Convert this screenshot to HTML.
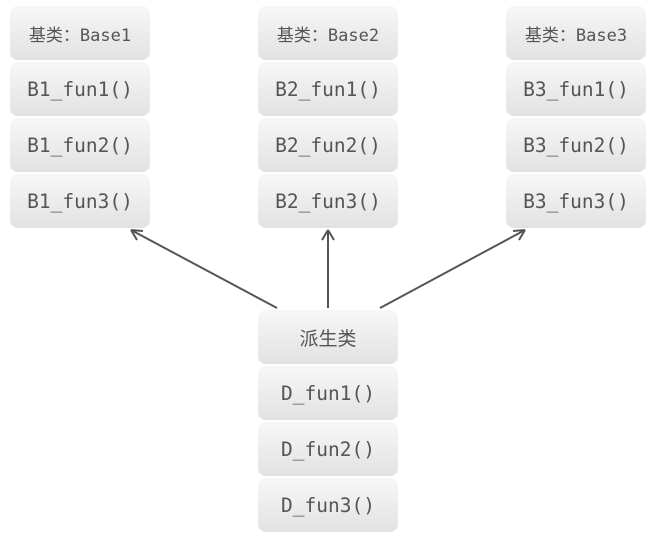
<!DOCTYPE html><html><head><meta charset="utf-8"><style>
body{margin:0;width:652px;height:540px;background:#fff;position:relative;overflow:hidden}
.b{position:absolute;width:140px;height:54px;border-radius:8px;background:linear-gradient(#f7f7f7,#e2e2e2);display:flex;align-items:center;justify-content:center;font-family:"DejaVu Sans Mono","Liberation Mono","Noto Sans CJK SC",monospace;font-size:19.5px;color:#555}
.c{font-family:"DejaVu Sans Mono","Noto Sans CJK SC",monospace;font-size:17px}
</style></head><body>
<div class="b c" style="left:10px;top:6px">基类：Base1</div>
<div class="b" style="left:10px;top:62px">B1_fun1()</div>
<div class="b" style="left:10px;top:118px">B1_fun2()</div>
<div class="b" style="left:10px;top:174px">B1_fun3()</div>
<div class="b c" style="left:258px;top:6px">基类：Base2</div>
<div class="b" style="left:258px;top:62px">B2_fun1()</div>
<div class="b" style="left:258px;top:118px">B2_fun2()</div>
<div class="b" style="left:258px;top:174px">B2_fun3()</div>
<div class="b c" style="left:506px;top:6px">基类：Base3</div>
<div class="b" style="left:506px;top:62px">B3_fun1()</div>
<div class="b" style="left:506px;top:118px">B3_fun2()</div>
<div class="b" style="left:506px;top:174px">B3_fun3()</div>
<div class="b c" style="left:258px;top:310px;font-size:19px">派生类</div>
<div class="b" style="left:258px;top:366px">D_fun1()</div>
<div class="b" style="left:258px;top:422px">D_fun2()</div>
<div class="b" style="left:258px;top:478px">D_fun3()</div>
<svg width="652" height="540" style="position:absolute;left:0;top:0" fill="none" stroke="#555" stroke-width="2">
<path d="M277 308L131 230M131 230l12 1M131 230l6 10"/>
<path d="M328 308V230M328 230l-6 10M328 230l6 10"/>
<path d="M380 308L525 230M525 230l-12 1M525 230l-6 10"/>
</svg>
</body></html>
